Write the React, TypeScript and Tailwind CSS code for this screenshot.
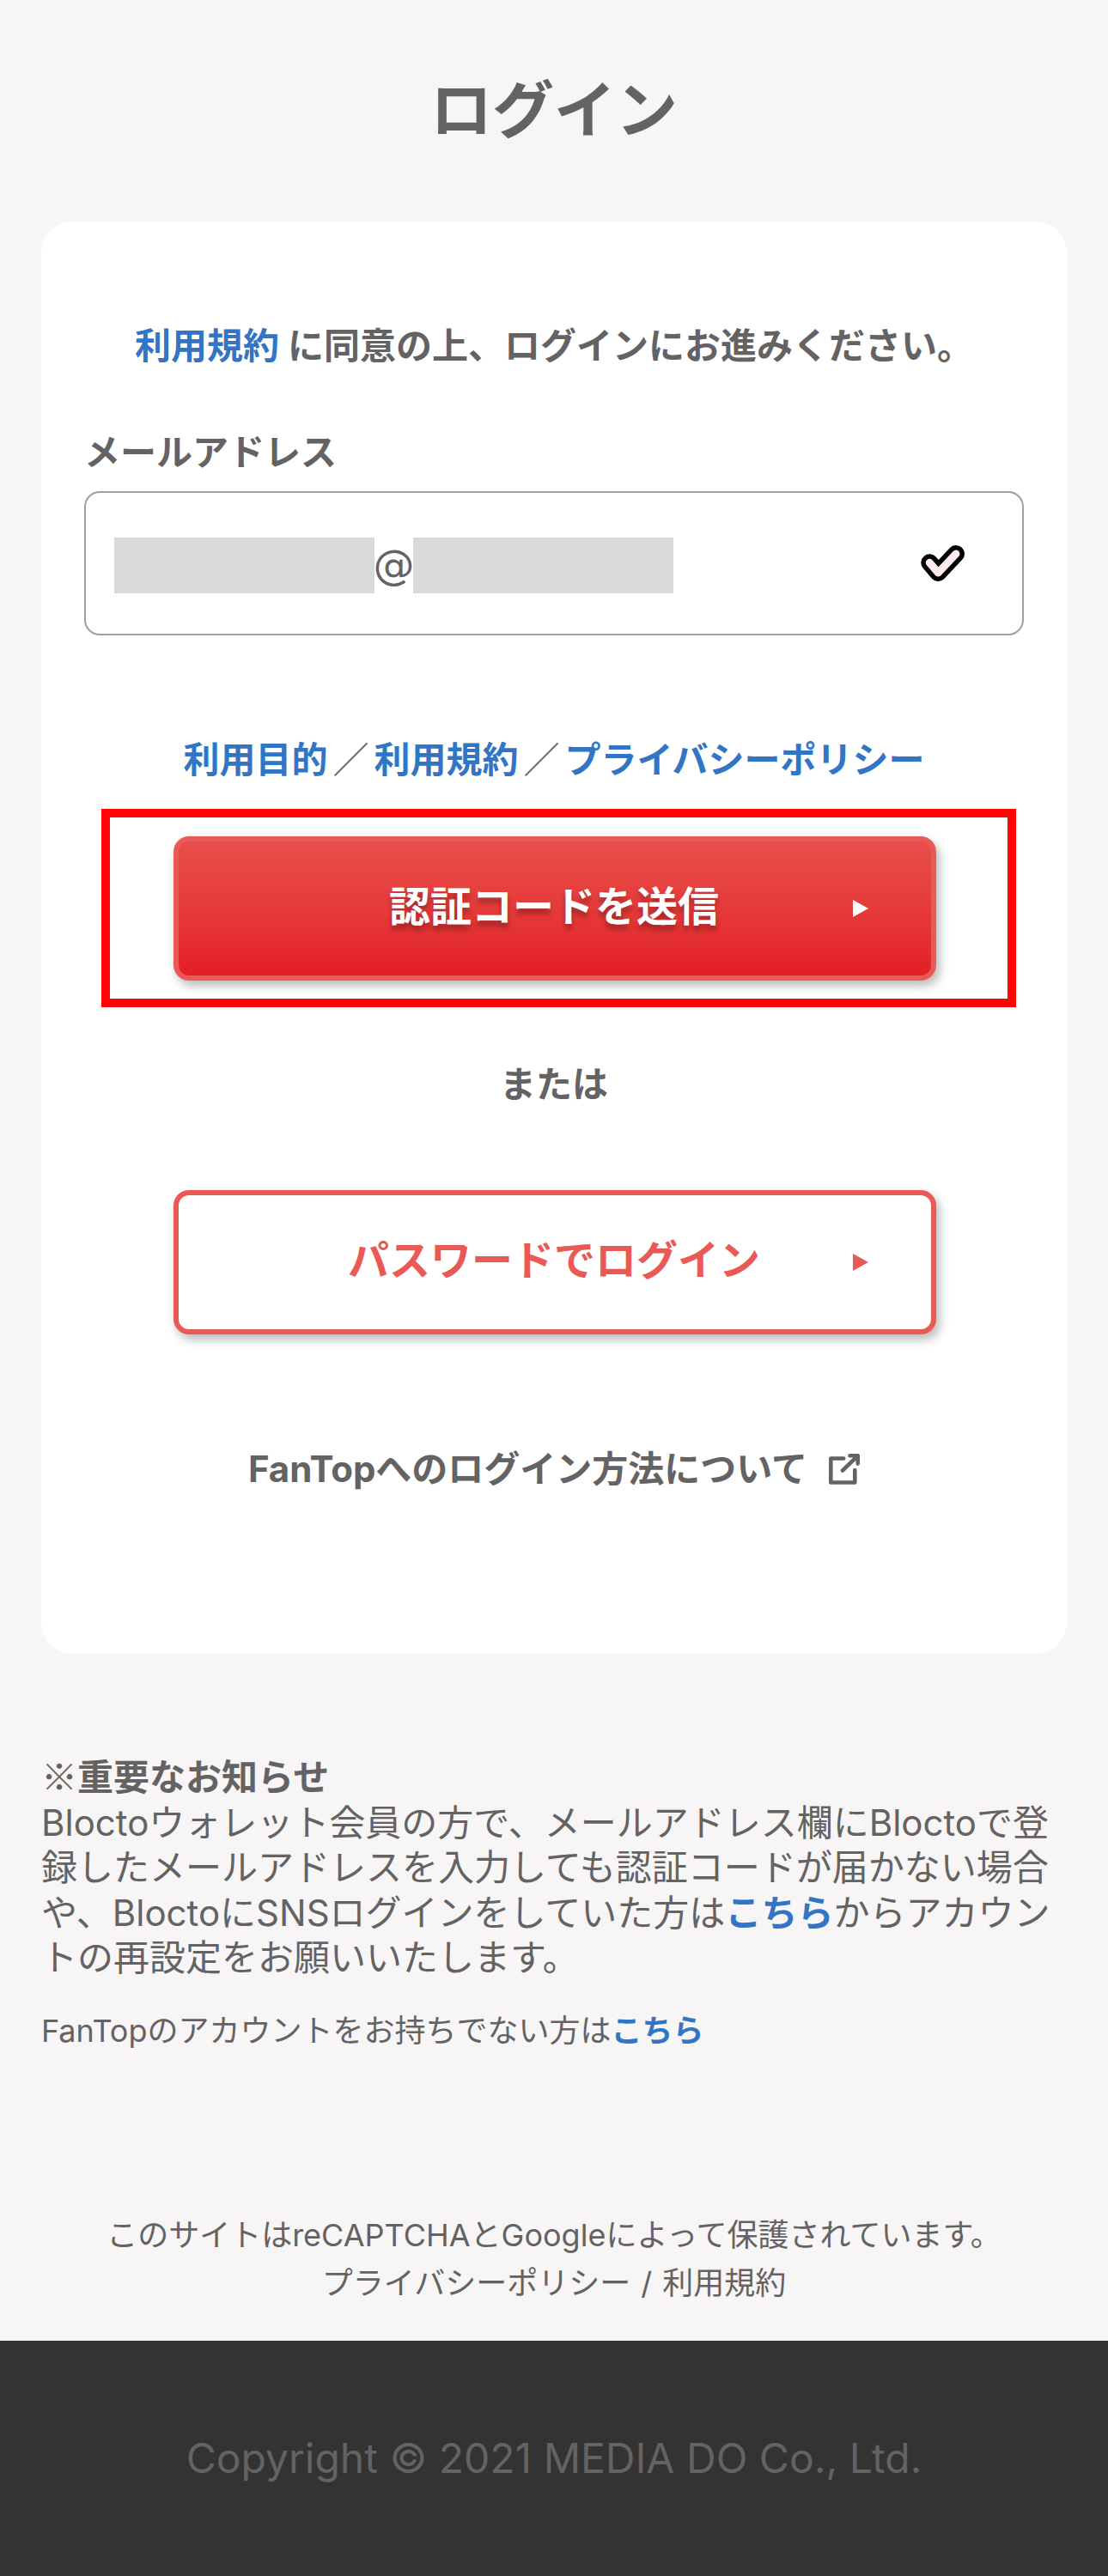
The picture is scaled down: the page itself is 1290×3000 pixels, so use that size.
import type { ReactNode } from 'react';

type ActionButtonProps = {
  variant: 'primary' | 'outline';
  children: ReactNode;
};

const ActionButton = ({ variant, children }: ActionButtonProps) => (
  <button
    type="button"
    className={`relative flex h-[168px] w-[888px] items-center justify-center rounded-[18px] border-[6px] border-[#e95955] pr-[2px] pb-[4px] text-[48px] leading-[60px] font-bold shadow-[4px_6px_12px_rgba(0,0,0,0.28)] ${
      variant === 'primary'
        ? 'bg-linear-to-b from-[#e84e4a] to-[#e31e26] text-white [text-shadow:0_6px_6px_rgba(0,0,0,0.3)]'
        : 'bg-white text-[#e95955]'
    }`}
  >
    {children}
    <svg
      viewBox="0 0 18 20"
      className="absolute top-[68px] right-[73px] h-5 w-[18px]"
      fill="currentColor"
    >
      <path d="M0 0 18 10 0 20Z" />
    </svg>
  </button>
);

const CheckMark = () => (
  <svg viewBox="0 0 52 44" className="h-[44px] w-[52px]" fill="none">
    <path
      d="M10.3 21.3 20.3 33 41 11"
      stroke="#000"
      strokeWidth="20"
      strokeLinecap="round"
      strokeLinejoin="round"
    />
    <path
      d="M10.3 21.3 20.3 33 41 11"
      stroke="#ffebed"
      strokeWidth="9"
      strokeLinecap="round"
      strokeLinejoin="round"
    />
  </svg>
);

const ExternalIcon = () => (
  <svg
    viewBox="0 0 36 36"
    className="h-9 w-9"
    fill="none"
    stroke="currentColor"
    strokeWidth="4.6"
    strokeLinecap="round"
    strokeLinejoin="round"
  >
    <path d="M17.2 5.5H2.3v28h28V19" />
    <path d="M24.5 2.3h9.2v9.3M33.7 2.3 16 19.5" />
  </svg>
);

const TextLink = ({ children }: { children: ReactNode }) => (
  <a href="#" className="font-bold text-[#3175c4]">
    {children}
  </a>
);

const App = () => {
  const policies = ['利用目的', '利用規約', 'プライバシーポリシー'];

  return (
    <div className="flex min-h-[3000px] w-[1290px] flex-col bg-[#f7f5f6] font-['Inter','Noto_Sans_CJK_JP',sans-serif] text-[42px] leading-[52px] text-[#646262]">
      <h1 className="mt-[86px] mb-[88px] text-center text-[72px] leading-[84px] font-bold">
        ログイン
      </h1>

      {/* Login card */}
      <main className="mx-12 flex h-[1668px] flex-col rounded-[36px] bg-white px-[50px] pt-[119px]">
        <p className="text-center font-bold">
          <TextLink>利用規約</TextLink> に同意の上、ログインにお進みください。
        </p>

        <div className="mt-[72px] font-bold">メールアドレス</div>
        <div className="mt-[19px] flex h-[168px] items-center justify-between rounded-[18px] border-2 border-[#a0a0a0] pr-[66px] pl-[33px]">
          <div className="flex items-center pt-[5px]">
            <span className="h-[65px] w-[303px] bg-[#d9d9d9]" />
            <span className="flex w-[45px] justify-center pb-0.5 font-['DejaVu_Sans',sans-serif] text-[48px] leading-[60px]">
              @
            </span>
            <span className="h-[65px] w-[303px] bg-[#d9d9d9]" />
          </div>
          <CheckMark />
        </div>

        <div className="mt-[119px] flex justify-center">
          {policies.map((policy, i) => (
            <span key={policy}>
              {i > 0 && <span className="mx-1.5">／</span>}
              <TextLink>{policy}</TextLink>
            </span>
          ))}
        </div>

        {/* Highlighted step */}
        <div className="mt-[31px] ml-5 h-[231px] w-[1065px] border-[10px] border-[#ff0505] pt-[22px] pl-[74px]">
          <ActionButton variant="primary">認証コードを送信</ActionButton>
        </div>

        <p className="mt-16 text-center font-bold">または</p>

        <div className="mt-[97px] ml-[104px]">
          <ActionButton variant="outline">パスワードでログイン</ActionButton>
        </div>

        <a
          href="#"
          className="mt-[131px] flex items-center justify-center gap-[25px] font-bold"
        >
          FanTopへのログイン方法について
          <ExternalIcon />
        </a>
      </main>

      {/* Notice */}
      <section className="mx-12 mt-[118px]">
        <div className="leading-[52.5px]">
          <p className="font-bold">
            <span className="font-['Noto_Sans_CJK_JP',sans-serif] leading-none">
              ※
            </span>
            重要なお知らせ
          </p>
          <p>
            Bloctoウォレット会員の方で、メールアドレス欄にBloctoで登録したメールアドレスを入力しても認証コードが届かない場合や、BloctoにSNSログインをしていた方は
            <TextLink>こちら</TextLink>
            からアカウントの再設定をお願いいたします。
          </p>
        </div>
        <p className="mt-9 text-[36px] leading-[45px]">
          FanTopのアカウントをお持ちでない方は<TextLink>こちら</TextLink>
        </p>
      </section>

      <div className="mt-[187px] text-center text-[36px] leading-[56px]">
        <p>このサイトはreCAPTCHAとGoogleによって保護されています。</p>
        <p>
          プライバシーポリシー<span className="mx-3">/</span>利用規約
        </p>
      </div>

      <footer className="mt-auto flex h-[274px] items-center justify-center bg-[#333] text-[48px]">
        Copyright © 2021 MEDIA DO Co., Ltd.
      </footer>
    </div>
  );
};

export default App;
